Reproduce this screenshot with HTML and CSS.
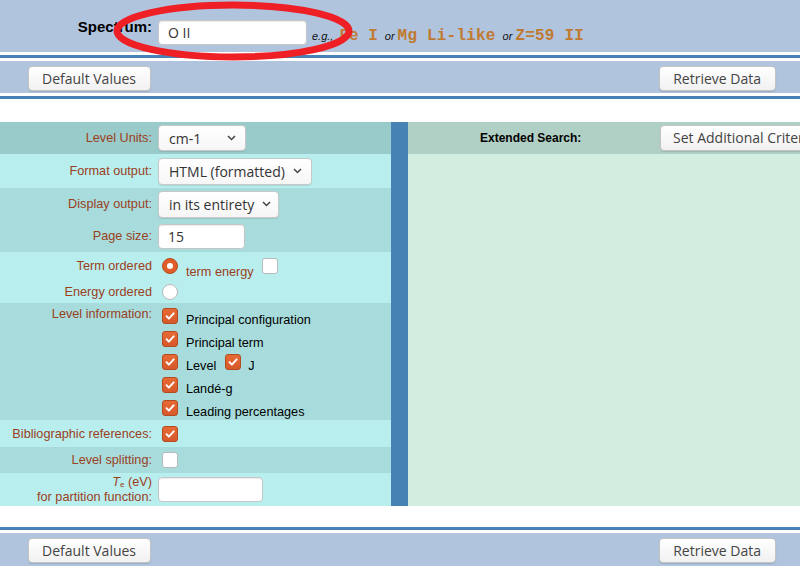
FILE: index.html
```html
<!DOCTYPE html>
<html lang="en">
<head>
<meta charset="utf-8">
<title>Levels Form</title>
<link rel="stylesheet" href="styles.css">
</head>
<body>
<div class="page">
  <header class="spec-band">
    <div class="spec-row">
      <label class="spec-label" for="spectra">Spectrum:</label>
      <div class="text-input spec-input" id="spectra">O II</div>
      <div class="examples">
        <i class="eg">e.g.,</i>
        <span class="code">Fe I</span>
        <i class="or">or</i>
        <span class="code">Mg Li-like</span>
        <i class="or">or</i>
        <span class="code">Z=59 II</span>
      </div>
    </div>
    <svg class="annot" width="250" height="64" viewBox="0 0 250 64" aria-hidden="true">
      <ellipse cx="121" cy="31" rx="116" ry="26" fill="none" stroke="#ef1f26" stroke-width="7"/>
    </svg>
  </header>
  <div class="sep"></div>
  <div class="btn-band">
    <button class="btn">Default Values</button>
    <button class="btn">Retrieve Data</button>
  </div>
  <div class="sep"></div>

  <main class="form">
    <section class="opts">
      <div class="row r-head">
        <span class="lbl">Level Units:</span>
        <div class="ctl"><div class="select w88"><span>cm-1</span><svg class="chev" width="9" height="6" viewBox="0 0 9 6"><path d="M1 1l3.5 3.5L8 1" fill="none" stroke="#444" stroke-width="1.5"/></svg></div></div>
      </div>
      <div class="row r-light r34">
        <span class="lbl">Format output:</span>
        <div class="ctl"><div class="select w154"><span>HTML (formatted)</span><svg class="chev" width="9" height="6" viewBox="0 0 9 6"><path d="M1 1l3.5 3.5L8 1" fill="none" stroke="#444" stroke-width="1.5"/></svg></div></div>
      </div>
      <div class="row r-dark">
        <span class="lbl">Display output:</span>
        <div class="ctl"><div class="select w121"><span>in its entirety</span><svg class="chev" width="9" height="6" viewBox="0 0 9 6"><path d="M1 1l3.5 3.5L8 1" fill="none" stroke="#444" stroke-width="1.5"/></svg></div></div>
      </div>
      <div class="row r-dark">
        <span class="lbl">Page size:</span>
        <div class="ctl"><div class="text-input w87">15</div></div>
      </div>

      <div class="group r-light g-order">
        <div class="row sub">
          <span class="lbl">Term ordered</span>
          <div class="ctl inline">
            <span class="radio on"></span>
            <span class="opt low">term energy</span>
            <span class="box"></span>
          </div>
        </div>
        <div class="row sub">
          <span class="lbl">Energy ordered</span>
          <div class="ctl inline"><span class="radio"></span></div>
        </div>
      </div>

      <div class="row top r-dark g-info">
        <span class="lbl">Level information:</span>
        <div class="ctl list">
          <div class="item"><span class="box on"><svg viewBox="0 0 16 16"><path d="M4 8.2l2.7 2.8L12.2 5" fill="none" stroke="#fff" stroke-width="2.2" stroke-linecap="round" stroke-linejoin="round"/></svg></span><span class="opt">Principal configuration</span></div>
          <div class="item"><span class="box on"><svg viewBox="0 0 16 16"><path d="M4 8.2l2.7 2.8L12.2 5" fill="none" stroke="#fff" stroke-width="2.2" stroke-linecap="round" stroke-linejoin="round"/></svg></span><span class="opt">Principal term</span></div>
          <div class="item"><span class="box on"><svg viewBox="0 0 16 16"><path d="M4 8.2l2.7 2.8L12.2 5" fill="none" stroke="#fff" stroke-width="2.2" stroke-linecap="round" stroke-linejoin="round"/></svg></span><span class="opt">Level</span><span class="box on mid"><svg viewBox="0 0 16 16"><path d="M4 8.2l2.7 2.8L12.2 5" fill="none" stroke="#fff" stroke-width="2.2" stroke-linecap="round" stroke-linejoin="round"/></svg></span><span class="opt">J</span></div>
          <div class="item"><span class="box on"><svg viewBox="0 0 16 16"><path d="M4 8.2l2.7 2.8L12.2 5" fill="none" stroke="#fff" stroke-width="2.2" stroke-linecap="round" stroke-linejoin="round"/></svg></span><span class="opt">Landé-g</span></div>
          <div class="item"><span class="box on"><svg viewBox="0 0 16 16"><path d="M4 8.2l2.7 2.8L12.2 5" fill="none" stroke="#fff" stroke-width="2.2" stroke-linecap="round" stroke-linejoin="round"/></svg></span><span class="opt">Leading percentages</span></div>
        </div>
      </div>

      <div class="row r-light r27">
        <span class="lbl">Bibliographic references:</span>
        <div class="ctl inline"><span class="box on"><svg viewBox="0 0 16 16"><path d="M4 8.2l2.7 2.8L12.2 5" fill="none" stroke="#fff" stroke-width="2.2" stroke-linecap="round" stroke-linejoin="round"/></svg></span></div>
      </div>
      <div class="row r-dark r26">
        <span class="lbl">Level splitting:</span>
        <div class="ctl inline"><span class="box"></span></div>
      </div>
      <div class="row r-light r33">
        <span class="lbl two"><i>T</i><sub>e</sub> (eV)<br>for partition function:</span>
        <div class="ctl"><div class="text-input w105"></div></div>
      </div>
    </section>

    <div class="divider"></div>

    <section class="ext">
      <div class="ext-head">
        <span class="ext-title">Extended Search:</span>
        <button class="btn wide">Set Additional Criteria</button>
      </div>
      <div class="ext-body"></div>
    </section>
  </main>

  <div class="sep bottom"></div>
  <div class="btn-band last">
    <button class="btn">Default Values</button>
    <button class="btn">Retrieve Data</button>
  </div>
</div>
</body>
</html>
```

FILE: styles.css
```css
* { box-sizing: border-box; }

html, body {
  margin: 0;
  padding: 0;
  background: #fff;
  overflow: hidden;
}

body {
  font-family: "Liberation Sans", Arial, sans-serif;
  font-size: 12.7px;
  color: #000;
  width: 800px;
  height: 569px;
}

.page {
  width: 800px;
  overflow: hidden;
}

/* ---------- top spectrum band ---------- */
.spec-band {
  position: relative;
  height: 52px;
  background: #b0c4de;
}

.spec-row {
  display: flex;
  align-items: flex-start;
  padding-top: 18px;
}

.spec-label {
  width: 152px;
  text-align: right;
  font-weight: bold;
  font-size: 15px;
  line-height: 17px;
}

.spec-input {
  margin-left: 6px;
  margin-top: 2px;
  width: 149px;
  height: 24px;
}

.examples {
  margin-left: 5px;
  padding-top: 9px;
  display: flex;
  align-items: baseline;
  white-space: nowrap;
}

.eg, .or {
  font-size: 11px;
  color: #111;
}

.eg { margin-right: 6px; }
.or { margin: 0 3px 0 7px; }

.code {
  font-family: "Liberation Mono", "Courier New", monospace;
  font-weight: bold;
  font-size: 16px;
  color: #c07a32;
}

.code + .or + .code { letter-spacing: 0.2px; }

.annot {
  position: absolute;
  left: 112px;
  top: 0;
}

/* ---------- separators & button bands ---------- */
.sep {
  height: 9px;
  background: #4682b4;
  border-top: 3px solid #fff;
  border-bottom: 3px solid #fff;
}

.sep.bottom { margin-top: 18px; }

.btn-band {
  height: 32px;
  background: #b0c4de;
  display: flex;
  justify-content: space-between;
  align-items: flex-start;
  padding: 5px 24px 0 28px;
}

.btn-band.last { height: 33px; }

.btn {
  font-family: "Open Sans", "Noto Sans", sans-serif;
  font-size: 14px;
  color: #444;
  height: 25px;
  padding: 0 14px 0 13px;
  border: 1px solid #c4c4c4;
  border-radius: 4px;
  background: linear-gradient(#ffffff, #f1f1f1);
  box-shadow: 0 1px 1px rgba(0,0,0,0.12);
  line-height: 22px;
  white-space: nowrap;
}

/* ---------- main form ---------- */
.form {
  margin-top: 20px;
  display: flex;
  height: 384px;
}

.opts {
  width: 391px;
  flex-shrink: 0;
}

.divider {
  width: 17px;
  background: #4682b4;
  flex-shrink: 0;
}

.ext {
  flex: 1;
  display: flex;
  flex-direction: column;
  min-width: 0;
}

.ext-head {
  height: 32px;
  background: #b0cfc5;
  display: flex;
  align-items: center;
  padding-left: 72px;
}

.ext-title {
  font-weight: bold;
  font-size: 12px;
  width: 180px;
  flex-shrink: 0;
}

.btn.wide {
  flex-shrink: 0;
  height: 26px;
  padding: 0 12px;
}

.ext-body {
  flex: 1;
  background: #d2eee0;
}

/* rows */
.row {
  display: grid;
  grid-template-columns: 152px 1fr;
  column-gap: 6px;
  align-items: center;
  height: 32px;
}

.r-head { background: #9acbcb; }
.r-light { background: #b9eeee; }
.r-dark { background: #a8dcdc; }

.r34 { height: 34px; }
.r27 { height: 27px; }
.r26 { height: 26px; }
.r33 { height: 33px; }

.lbl {
  text-align: right;
  color: #9a401c;
  font-size: 12.7px;
  white-space: nowrap;
}

.lbl.two {
  line-height: 13px;
}

.lbl sub {
  font-size: 8px;
  vertical-align: -1px;
}

.ctl { display: flex; align-items: center; }

/* select look */
.select {
  display: flex;
  align-items: center;
  justify-content: space-between;
  height: 27px;
  padding: 0 9px 0 10px;
  background: linear-gradient(#ffffff, #f6f6f6);
  border: 1px solid #c8c8c8;
  border-radius: 4px;
  box-shadow: 0 1px 1px rgba(0,0,0,0.1);
  font-family: "Open Sans", "Noto Sans", sans-serif;
  font-size: 14px;
  color: #333;
  white-space: nowrap;
}

.select.w88 { width: 88px; height: 26px; }
.select.w154 { width: 154px; }
.select.w121 { width: 121px; padding-right: 7px; }

.chev { flex-shrink: 0; margin-left: 4px; }

.text-input {
  height: 25px;
  background: #fff;
  border: 1px solid #c6c6c6;
  border-radius: 4px;
  box-shadow: inset 0 1px 1px rgba(0,0,0,0.08);
  font-family: "Open Sans", "Noto Sans", sans-serif;
  font-size: 14px;
  color: #333;
  padding: 0 9px;
  line-height: 23px;
}

.w87 { width: 87px; }
.w105 { width: 105px; }

/* ordering group */
.g-order {
  height: 51px;
  padding-top: 6px;
}

.row.sub {
  height: 26px;
  align-items: start;
}

.row.sub .lbl { padding-top: 1px; }

.inline { padding-left: 4px; }

.row.sub .ctl { align-items: flex-start; }

.radio {
  width: 16px;
  height: 16px;
  border-radius: 50%;
  background: #fff;
  border: 1px solid #b9b9b9;
  flex-shrink: 0;
  position: relative;
}

.radio.on {
  background: #df5f2c;
  border-color: #b9481c;
}

.radio.on::after {
  content: "";
  position: absolute;
  left: 4px;
  top: 4px;
  width: 6px;
  height: 6px;
  border-radius: 50%;
  background: #fff;
}

.box {
  width: 16px;
  height: 16px;
  border-radius: 3px;
  background: #fff;
  border: 1px solid #b9b9b9;
  flex-shrink: 0;
  display: block;
}

.box svg { width: 14px; height: 14px; display: block; }

.box.on {
  background: linear-gradient(#e66a35, #d7582a);
  border-color: #b44a1e;
}

.opt {
  font-size: 12.7px;
  color: #000;
  margin-left: 8px;
}

.opt.low {
  color: #9a401c;
  padding-top: 7px;
  margin-right: 8px;
}

/* level information */
.row.top {
  align-items: start;
  height: 117px;
  padding-top: 4px;
}

.list {
  flex-direction: column;
  align-items: flex-start;
  padding-left: 4px;
  padding-top: 1px;
}

.item {
  display: flex;
  align-items: flex-start;
  height: 23px;
}

.item .opt { padding-top: 5px; }

.item .box.mid { margin-left: 9px; }

.item .box.mid + .opt { margin-left: 7px; }
```
